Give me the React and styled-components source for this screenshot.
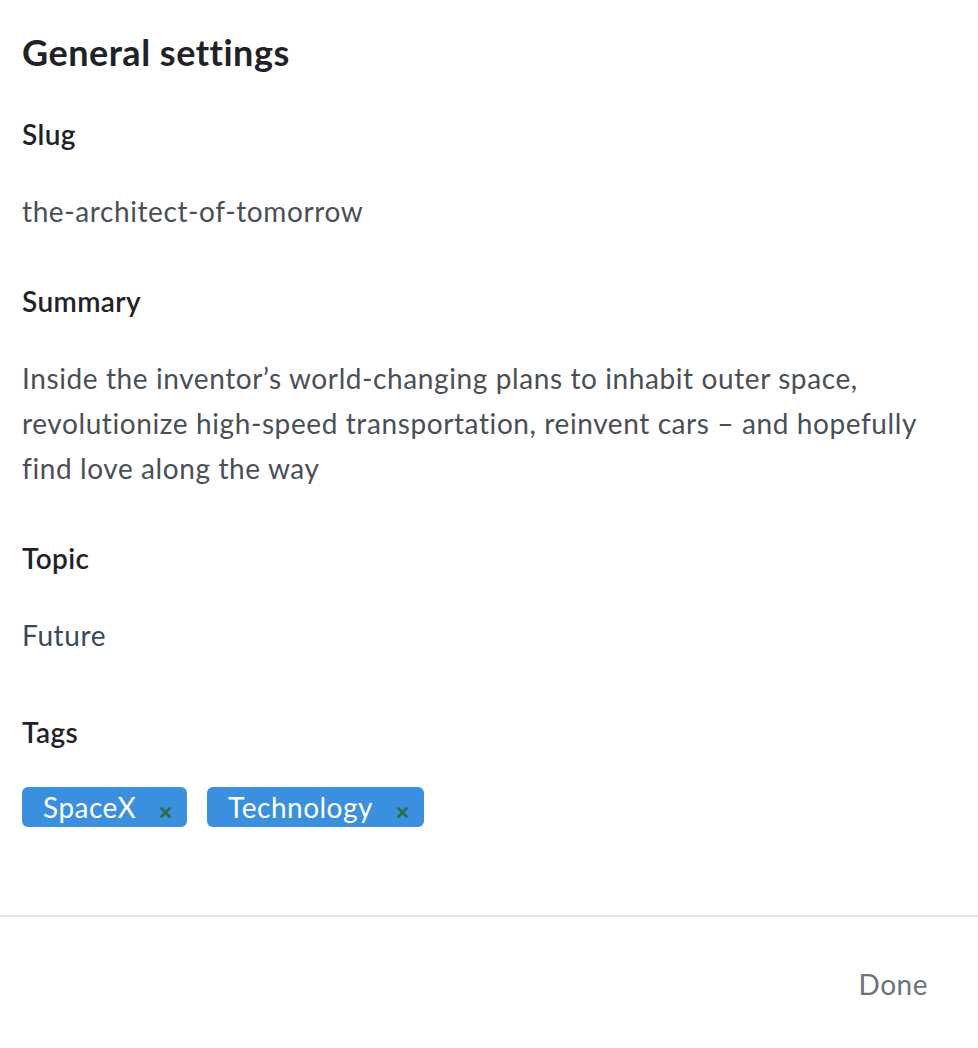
import React from "react"
import styled, { createGlobalStyle } from "styled-components"

const GlobalStyle = createGlobalStyle`
  body {
    margin: 0;
    background: #ffffff;
    font-family: 'Lato', 'Noto Sans', sans-serif;
  }
`

const Panel = styled.div`
  width: 978px;
  min-height: 1048px;
  display: flex;
  flex-direction: column;
`

const Body = styled.div`
  padding: 30px 44px 0 22px;
  display: flex;
  flex-direction: column;
`

const Title = styled.h2`
  margin: 0 0 38px;
  font-size: 36px;
  line-height: 44px;
  font-weight: 700;
  letter-spacing: 0.5px;
  color: #1f2226;
`

const Field = styled.section`
  display: flex;
  flex-direction: column;
  margin-bottom: ${p => (p.gap === undefined ? 45 : p.gap)}px;
`

const Label = styled.h4`
  margin: 0 0 32px;
  font-size: 28px;
  line-height: 45px;
  font-weight: 600;
  letter-spacing: 0.4px;
  color: #1f2226;
`

const Value = styled.p`
  margin: 0;
  font-size: 28px;
  line-height: 45px;
  letter-spacing: 0.6px;
  color: ${p => p.tone || "#4a4f57"};
`

const TagList = styled.div`
  display: flex;
  gap: 20px;
`

const Tag = styled.span`
  display: inline-flex;
  align-items: center;
  height: 40px;
  padding: 0 16px 0 21px;
  gap: 24px;
  border-radius: 6px;
  background: #3a90de;
  color: #ffffff;
  font-size: 28px;
  letter-spacing: 0.5px;
`

const Remove = styled.button`
  display: flex;
  border: 0;
  background: none;
  padding: 0;
  margin-top: 10px;
  color: #2c6b44;
  cursor: pointer;
`

const Footer = styled.footer`
  margin-top: 88px;
  border-top: 2px solid #dfe2e6;
  display: flex;
  justify-content: flex-end;
  padding: 45px 50px 0;
`

const DoneButton = styled.button`
  border: 0;
  background: none;
  padding: 0;
  font-family: inherit;
  font-size: 28px;
  line-height: 45px;
  letter-spacing: 0.5px;
  color: #6b737d;
  cursor: pointer;
`

const tags = ["SpaceX", "Technology"]

const CloseIcon = () => (
  <svg width="11" height="11" viewBox="0 0 11 11">
    <path d="M1.5 1.5 L9.5 9.5 M9.5 1.5 L1.5 9.5" stroke="currentColor" strokeWidth="2.6" strokeLinecap="square" />
  </svg>
)

const App = () => (
  <Panel>
    <GlobalStyle />
    <Body>
      <Title>General settings</Title>
      <Field>
        <Label>Slug</Label>
        <Value>the-architect-of-tomorrow</Value>
      </Field>
      <Field>
        <Label>Summary</Label>
        <Value>
          Inside the inventor’s world-changing plans to inhabit outer space, revolutionize
          high-speed transportation, reinvent cars – and hopefully find love along the way
        </Value>
      </Field>
      <Field gap={52}>
        <Label>Topic</Label>
        <Value tone="#364a62">Future</Value>
      </Field>
      <Field gap={0}>
        <Label>Tags</Label>
        <TagList>
          {tags.map(t => (
            <Tag key={t}>
              {t}
              <Remove aria-label={`Remove ${t}`}>
                <CloseIcon />
              </Remove>
            </Tag>
          ))}
        </TagList>
      </Field>
    </Body>
    <Footer>
      <DoneButton>Done</DoneButton>
    </Footer>
  </Panel>
)

export default App
